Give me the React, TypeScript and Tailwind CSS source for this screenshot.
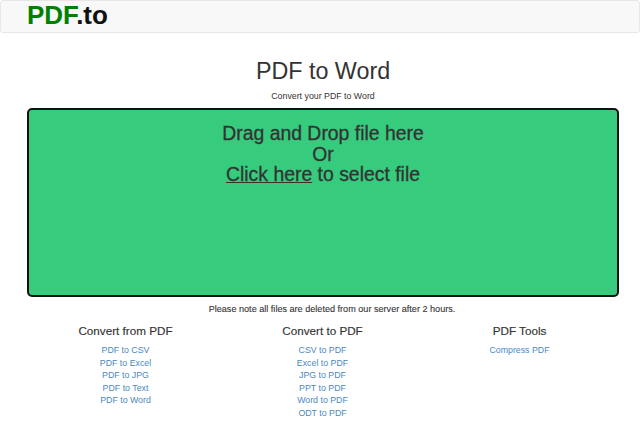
const from = ["PDF to CSV", "PDF to Excel", "PDF to JPG", "PDF to Text", "PDF to Word"];
const to = ["CSV to PDF", "Excel to PDF", "JPG to PDF", "PPT to PDF", "Word to PDF", "ODT to PDF"];
const tools = ["Compress PDF"];

function Column({ title, links }: { title: string; links: string[] }) {
  return (
    <div className="w-[197px] text-center">
      <h3 className="text-[11.7px] leading-[14px] text-[#333] mt-[3px] mb-0 [-webkit-text-stroke:0.15px_#333]">{title}</h3>
      <ul className="pt-[6px]">
        {links.map((l) => (
          <li key={l} className="text-[8.8px] leading-[12.5px] text-[#4a88bf]">
            <a href="#">{l}</a>
          </li>
        ))}
      </ul>
    </div>
  );
}

export default function App() {
  return (
    <div className="w-[640px] h-[443px] overflow-hidden bg-white text-[#333]" style={{ fontFamily: '"Liberation Sans", Arial, sans-serif' }}>
      <header className="h-[33px] bg-[#f8f8f8] border border-[#e7e7e7] rounded-[3px] pl-[26px] flex items-center">
        <a href="#" className="text-[26px] font-bold leading-none text-[#111] mt-[-4px]"><span className="text-[#008000]">PDF</span>.to</a>
      </header>
      <div className="w-[592px] ml-[27px]">
        <h1 className="text-center text-[23.3px] leading-[26px] mt-[25px]">PDF to Word</h1>
        <p className="text-center text-[8.8px] leading-[12px] mt-[6px]">Convert your PDF to Word</p>
        <div className="mt-[6px] h-[189px] bg-[#36cb7d] border-2 border-[#111] rounded-[5px] text-center text-[19.4px] leading-[20.5px] text-[#333] pt-[13px] [-webkit-text-stroke:0.3px_#333]">
          <div>Drag and Drop file here</div>
          <div>Or</div>
          <div><a href="#" className="underline">Click here</a> to select file</div>
        </div>
        <p className="text-center text-[9.1px] leading-[12px] mt-[6px] pl-[18px] [-webkit-text-stroke:0.1px_#333]">Please note all files are deleted from our server after 2 hours.</p>
        <div className="mt-[6px] flex">
          <Column title="Convert from PDF" links={from} />
          <Column title="Convert to PDF" links={to} />
          <Column title="PDF Tools" links={tools} />
        </div>
      </div>
    </div>
  );
}
